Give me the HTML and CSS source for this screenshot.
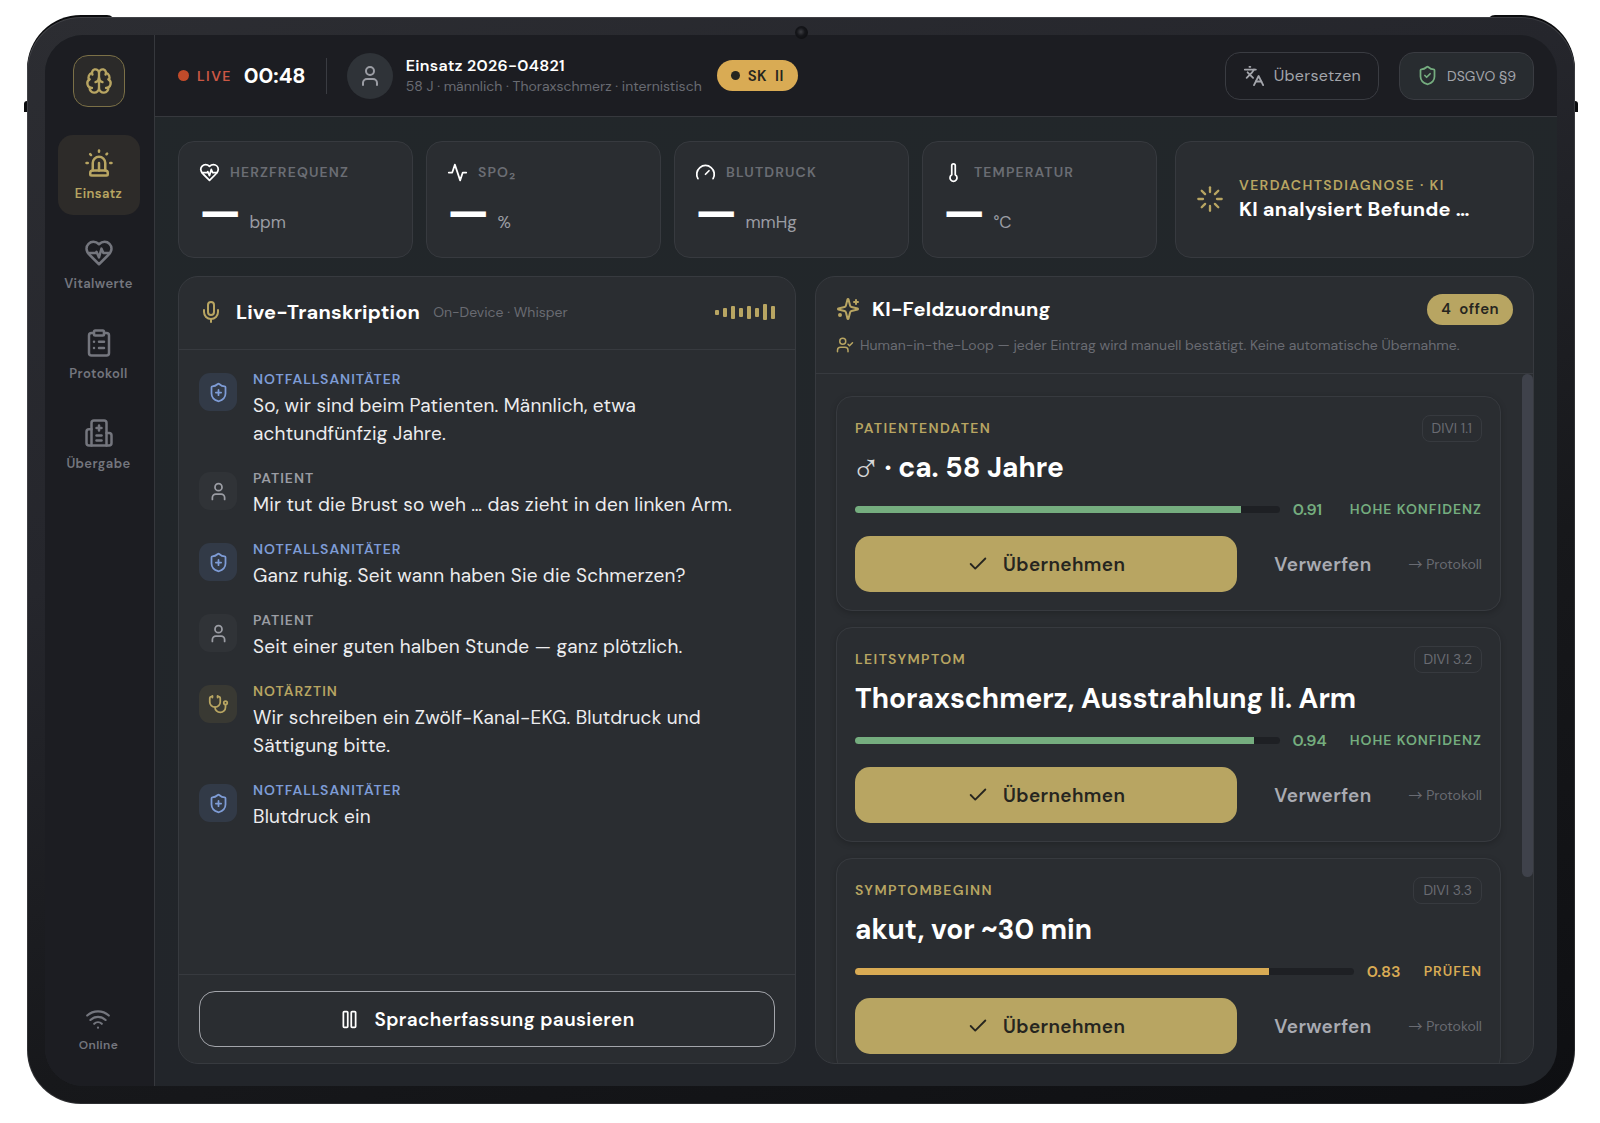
FILE: index.html
```html
<!DOCTYPE html>
<html lang="de">
<head>
    <meta charset="UTF-8">
    <meta name="viewport" content="width=device-width, initial-scale=1.0">
    <title>Einsatz 2026-04821</title>
    <link rel="stylesheet" href="styles.css">
</head>
<body>

<!-- Icon sprite -->
<svg class="sprite" aria-hidden="true">
    <symbol id="i-brain" viewBox="0 0 24 24"><path d="M12 18V5"/><path d="M15 13a4.17 4.17 0 0 1-3-4 4.17 4.17 0 0 1-3 4"/><path d="M17.598 6.5A3 3 0 1 0 12 5a3 3 0 1 0-5.598 1.5"/><path d="M17.997 5.125a4 4 0 0 1 2.526 5.77"/><path d="M18 18a4 4 0 0 0 2-7.464"/><path d="M19.967 17.483A4 4 0 1 1 12 18a4 4 0 1 1-7.967-.517"/><path d="M6 18a4 4 0 0 1-2-7.464"/><path d="M6.003 5.125a4 4 0 0 0-2.526 5.77"/></symbol>
    <symbol id="i-siren" viewBox="0 0 24 24"><path d="M7 18v-6a5 5 0 1 1 10 0v6"/><path d="M5 21a1 1 0 0 0 1 1h12a1 1 0 0 0 1-1v-1a2 2 0 0 0-2-2H7a2 2 0 0 0-2 2z"/><path d="M21 12h1"/><path d="M18.5 4.5 18 5"/><path d="M2 12h1"/><path d="M12 2v1"/><path d="m4.929 4.929.707.707"/><path d="M12 12v6"/></symbol>
    <symbol id="i-heart" viewBox="0 0 24 24"><path d="M19 14c1.49-1.46 3-3.21 3-5.5A5.5 5.5 0 0 0 16.5 3c-1.76 0-3 .5-4.5 2-1.5-1.5-2.74-2-4.5-2A5.5 5.5 0 0 0 2 8.5c0 2.3 1.5 4.05 3 5.5l7 7Z"/><path d="M3.22 12H9.5l.5-1 2 4.5 2-7 1.5 3.5h5.27"/></symbol>
    <symbol id="i-clipboard" viewBox="0 0 24 24"><rect x="8" y="2" width="8" height="4" rx="1"/><path d="M16 4h2a2 2 0 0 1 2 2v14a2 2 0 0 1-2 2H6a2 2 0 0 1-2-2V6a2 2 0 0 1 2-2h2"/><path d="M12 11h4"/><path d="M12 16h4"/><path d="M8 11h.01"/><path d="M8 16h.01"/></symbol>
    <symbol id="i-hospital" viewBox="0 0 24 24"><path d="M12 6v4"/><path d="M14 14h-4"/><path d="M14 18h-4"/><path d="M14 8h-4"/><path d="M18 12h2a2 2 0 0 1 2 2v6a2 2 0 0 1-2 2H4a2 2 0 0 1-2-2v-9a2 2 0 0 1 2-2h2"/><path d="M18 22V4a2 2 0 0 0-2-2H8a2 2 0 0 0-2 2v18"/></symbol>
    <symbol id="i-wifi" viewBox="0 0 24 24"><path d="M12 20h.01"/><path d="M2 8.82a15 15 0 0 1 20 0"/><path d="M5 12.859a10 10 0 0 1 14 0"/><path d="M8.5 16.429a5 5 0 0 1 7 0"/></symbol>
    <symbol id="i-user" viewBox="0 0 24 24"><path d="M19 21v-2a4 4 0 0 0-4-4H9a4 4 0 0 0-4 4v2"/><circle cx="12" cy="7" r="4"/></symbol>
    <symbol id="i-languages" viewBox="0 0 24 24"><path d="m5 8 6 6"/><path d="m4 14 6-6 2-3"/><path d="M2 5h12"/><path d="M7 2h1"/><path d="m22 22-5-10-5 10"/><path d="M14 18h6"/></symbol>
    <symbol id="i-shield-check" viewBox="0 0 24 24"><path d="M20 13c0 5-3.5 7.5-7.66 8.95a1 1 0 0 1-.67-.01C7.5 20.5 4 18 4 13V6a1 1 0 0 1 1-1c2 0 4.5-1.2 6.24-2.72a1.17 1.17 0 0 1 1.52 0C14.51 3.81 17 5 19 5a1 1 0 0 1 1 1z"/><path d="m9 12 2 2 4-4"/></symbol>
    <symbol id="i-shield-plus" viewBox="0 0 24 24"><path d="M20 13c0 5-3.5 7.5-7.66 8.95a1 1 0 0 1-.67-.01C7.5 20.5 4 18 4 13V6a1 1 0 0 1 1-1c2 0 4.5-1.2 6.24-2.72a1.17 1.17 0 0 1 1.52 0C14.51 3.81 17 5 19 5a1 1 0 0 1 1 1z"/><path d="M9 12h6"/><path d="M12 9v6"/></symbol>
    <symbol id="i-activity" viewBox="0 0 24 24"><path d="M22 12h-4l-3 9L9 3l-3 9H2"/></symbol>
    <symbol id="i-gauge" viewBox="0 0 24 24"><path d="m12 14 4-4"/><path d="M3.34 19a10 10 0 1 1 17.32 0"/></symbol>
    <symbol id="i-thermo" viewBox="0 0 24 24"><path d="M14 4v10.54a4 4 0 1 1-4 0V4a2 2 0 0 1 4 0Z"/></symbol>
    <symbol id="i-loader" viewBox="0 0 24 24"><path d="M12 2v4"/><path d="m16.2 7.8 2.9-2.9"/><path d="M18 12h4"/><path d="m16.2 16.2 2.9 2.9"/><path d="M12 18v4"/><path d="m4.9 19.1 2.9-2.9"/><path d="M2 12h4"/><path d="m4.9 4.9 2.9 2.9"/></symbol>
    <symbol id="i-mic" viewBox="0 0 24 24"><path d="M12 2a3 3 0 0 0-3 3v7a3 3 0 0 0 6 0V5a3 3 0 0 0-3-3Z"/><path d="M19 10v2a7 7 0 0 1-14 0v-2"/><path d="M12 19v3"/></symbol>
    <symbol id="i-sparkles" viewBox="0 0 24 24"><path d="M9.937 15.5A2 2 0 0 0 8.5 14.063l-6.135-1.582a.5.5 0 0 1 0-.962L8.5 9.936A2 2 0 0 0 9.937 8.5l1.582-6.135a.5.5 0 0 1 .963 0L14.063 8.5A2 2 0 0 0 15.5 9.937l6.135 1.581a.5.5 0 0 1 0 .964L15.5 14.063a2 2 0 0 0-1.437 1.437l-1.582 6.135a.5.5 0 0 1-.963 0z"/><path d="M20 3v4"/><path d="M22 5h-4"/><circle cx="4" cy="18" r="1"/></symbol>
    <symbol id="i-user-check" viewBox="0 0 24 24"><path d="m16 11 2 2 4-4"/><path d="M16 21v-2a4 4 0 0 0-4-4H6a4 4 0 0 0-4 4v2"/><circle cx="9" cy="7" r="4"/></symbol>
    <symbol id="i-stethoscope" viewBox="0 0 24 24"><path d="M11 2v2"/><path d="M5 2v2"/><path d="M5 3H4a2 2 0 0 0-2 2v4a6 6 0 0 0 12 0V5a2 2 0 0 0-2-2h-1"/><path d="M8 15a6 6 0 0 0 12 0v-3"/><circle cx="20" cy="10" r="2"/></symbol>
    <symbol id="i-check" viewBox="0 0 24 24"><path d="M20 6 9 17l-5-5"/></symbol>
    <symbol id="i-pause" viewBox="0 0 24 24"><rect x="14" y="3" width="5" height="18" rx="1"/><rect x="5" y="3" width="5" height="18" rx="1"/></symbol>
</svg>

<div class="device">
    <span class="corner corner-left"></span>
    <span class="corner corner-right"></span>
    <span class="side-key side-key-left"></span>
    <span class="side-key side-key-right"></span>
    <span class="camera"></span>

    <div class="screen">
        <nav class="sidebar">
            <div class="logo"><svg class="icon icon-28"><use href="#i-brain"/></svg></div>
            <a href="#" class="nav-item active"><svg class="icon icon-30"><use href="#i-siren"/></svg>Einsatz</a>
            <a href="#" class="nav-item"><svg class="icon icon-30"><use href="#i-heart"/></svg>Vitalwerte</a>
            <a href="#" class="nav-item"><svg class="icon icon-30"><use href="#i-clipboard"/></svg>Protokoll</a>
            <a href="#" class="nav-item"><svg class="icon icon-30"><use href="#i-hospital"/></svg>Übergabe</a>
            <div class="online"><svg class="icon icon-26"><use href="#i-wifi"/></svg>Online</div>
        </nav>

        <div class="main">
            <header class="topbar">
                <span class="live"><span class="live-dot"></span>LIVE</span>
                <span class="timer">00:48</span>
                <span class="divider"></span>
                <span class="avatar"><svg class="icon icon-24"><use href="#i-user"/></svg></span>
                <div class="mission">
                    <h1>Einsatz 2026-04821</h1>
                    <p>58 J · männlich · Thoraxschmerz · internistisch</p>
                </div>
                <span class="pill pill-amber"><span class="pill-dot"></span><span>SK</span> <span>II</span></span>
                <div class="top-actions">
                    <button class="btn-top"><svg class="icon icon-22"><use href="#i-languages"/></svg>Übersetzen</button>
                    <span class="privacy"><svg class="icon icon-21"><use href="#i-shield-check"/></svg>DSGVO §9</span>
                </div>
            </header>

            <main class="content">
                <section class="overview">
                    <div class="vitals">
                        <div class="vital">
                            <div class="vital-label"><svg class="icon icon-21"><use href="#i-heart"/></svg>HERZFREQUENZ</div>
                            <div class="vital-value"><b>—</b>bpm</div>
                        </div>
                        <div class="vital">
                            <div class="vital-label"><svg class="icon icon-21"><use href="#i-activity"/></svg>SPO₂</div>
                            <div class="vital-value"><b>—</b>%</div>
                        </div>
                        <div class="vital">
                            <div class="vital-label"><svg class="icon icon-21"><use href="#i-gauge"/></svg>BLUTDRUCK</div>
                            <div class="vital-value"><b>—</b>mmHg</div>
                        </div>
                        <div class="vital">
                            <div class="vital-label"><svg class="icon icon-21"><use href="#i-thermo"/></svg>TEMPERATUR</div>
                            <div class="vital-value"><b>—</b>°C</div>
                        </div>
                    </div>
                    <div class="diagnosis">
                        <svg class="icon icon-28 gold"><use href="#i-loader"/></svg>
                        <div>
                            <div class="caption gold">VERDACHTSDIAGNOSE · KI</div>
                            <div class="diagnosis-text">KI analysiert Befunde …</div>
                        </div>
                    </div>
                </section>

                <div class="panels">
                    <section class="panel">
                        <div class="transcript-head">
                            <svg class="icon icon-24 gold"><use href="#i-mic"/></svg>
                            <h2>Live-Transkription</h2>
                            <span class="hint">On-Device · Whisper</span>
                            <div class="wave">
                                <i class="h5"></i><i class="h9"></i><i class="h13"></i><i class="h9"></i><i class="h13"></i><i class="h9"></i><i class="h16"></i><i class="h13"></i>
                            </div>
                        </div>
                        <div class="messages">
                            <div class="message medic">
                                <span class="role-icon"><svg class="icon icon-21"><use href="#i-shield-plus"/></svg></span>
                                <div><div class="caption">NOTFALLSANITÄTER</div><p>So, wir sind beim Patienten. Männlich, etwa achtundfünfzig Jahre.</p></div>
                            </div>
                            <div class="message patient">
                                <span class="role-icon"><svg class="icon icon-21"><use href="#i-user"/></svg></span>
                                <div><div class="caption">PATIENT</div><p>Mir tut die Brust so weh … das zieht in den linken Arm.</p></div>
                            </div>
                            <div class="message medic">
                                <span class="role-icon"><svg class="icon icon-21"><use href="#i-shield-plus"/></svg></span>
                                <div><div class="caption">NOTFALLSANITÄTER</div><p>Ganz ruhig. Seit wann haben Sie die Schmerzen?</p></div>
                            </div>
                            <div class="message patient">
                                <span class="role-icon"><svg class="icon icon-21"><use href="#i-user"/></svg></span>
                                <div><div class="caption">PATIENT</div><p>Seit einer guten halben Stunde — ganz plötzlich.</p></div>
                            </div>
                            <div class="message doctor">
                                <span class="role-icon"><svg class="icon icon-21"><use href="#i-stethoscope"/></svg></span>
                                <div><div class="caption">NOTÄRZTIN</div><p>Wir schreiben ein Zwölf-Kanal-EKG. Blutdruck und Sättigung bitte.</p></div>
                            </div>
                            <div class="message medic">
                                <span class="role-icon"><svg class="icon icon-21"><use href="#i-shield-plus"/></svg></span>
                                <div><div class="caption">NOTFALLSANITÄTER</div><p>Blutdruck ein</p></div>
                            </div>
                        </div>
                        <div class="transcript-foot">
                            <button class="btn-pause"><svg class="icon icon-21"><use href="#i-pause"/></svg>Spracherfassung pausieren</button>
                        </div>
                    </section>

                    <section class="panel">
                        <div class="fields-head">
                            <div class="fields-title">
                                <svg class="icon icon-24 gold"><use href="#i-sparkles"/></svg>
                                <h2>KI-Feldzuordnung</h2>
                                <span class="pill pill-gold"><span>4</span> <span>offen</span></span>
                            </div>
                            <div class="hint fields-hint"><svg class="icon icon-18 gold"><use href="#i-user-check"/></svg>Human-in-the-Loop — jeder Eintrag wird manuell bestätigt. Keine automatische Übernahme.</div>
                        </div>
                        <div class="fields-body">
                            <div class="fields-list">
                                <article class="field">
                                    <div class="field-top"><span class="caption gold">PATIENTENDATEN</span><span class="tag">DIVI 1.1</span></div>
                                    <h3><span class="sex">♂</span> · ca. 58 Jahre</h3>
                                    <div class="confidence high">
                                        <div class="track"><div class="fill" style="width: 91%"></div></div>
                                        <span class="score">0.91</span><span class="caption">HOHE KONFIDENZ</span>
                                    </div>
                                    <div class="field-actions">
                                        <button class="btn-accept"><svg class="icon icon-22"><use href="#i-check"/></svg>Übernehmen</button>
                                        <button class="btn-reject">Verwerfen</button>
                                        <span class="hint"><span class="arrow">→</span> Protokoll</span>
                                    </div>
                                </article>
                                <article class="field">
                                    <div class="field-top"><span class="caption gold">LEITSYMPTOM</span><span class="tag">DIVI 3.2</span></div>
                                    <h3>Thoraxschmerz, Ausstrahlung li. Arm</h3>
                                    <div class="confidence high">
                                        <div class="track"><div class="fill" style="width: 94%"></div></div>
                                        <span class="score">0.94</span><span class="caption">HOHE KONFIDENZ</span>
                                    </div>
                                    <div class="field-actions">
                                        <button class="btn-accept"><svg class="icon icon-22"><use href="#i-check"/></svg>Übernehmen</button>
                                        <button class="btn-reject">Verwerfen</button>
                                        <span class="hint"><span class="arrow">→</span> Protokoll</span>
                                    </div>
                                </article>
                                <article class="field">
                                    <div class="field-top"><span class="caption gold">SYMPTOMBEGINN</span><span class="tag">DIVI 3.3</span></div>
                                    <h3>akut, vor ~30 min</h3>
                                    <div class="confidence check">
                                        <div class="track"><div class="fill" style="width: 83%"></div></div>
                                        <span class="score">0.83</span><span class="caption">PRÜFEN</span>
                                    </div>
                                    <div class="field-actions">
                                        <button class="btn-accept"><svg class="icon icon-22"><use href="#i-check"/></svg>Übernehmen</button>
                                        <button class="btn-reject">Verwerfen</button>
                                        <span class="hint"><span class="arrow">→</span> Protokoll</span>
                                    </div>
                                </article>
                            </div>
                            <div class="scrollbar"><div class="thumb"></div></div>
                        </div>
                    </section>
                </div>
            </main>
        </div>
    </div>
</div>

</body>
</html>
```

FILE: styles.css
```css
* {
    box-sizing: border-box;
}
body {
    margin: 0;
    background-color: #fff;
    color: #fff;
    font-family: "DM Sans", Inter, "Liberation Sans", sans-serif;
    font-size: 14px;
}
h1, h2, h3, p {
    margin: 0;
}
button {
    font-family: inherit;
    letter-spacing: 0.02em;
    cursor: pointer;
}
.sprite {
    display: none;
}
.icon {
    flex: none;
    fill: none;
    stroke: currentColor;
    stroke-width: 2;
    stroke-linecap: round;
    stroke-linejoin: round;
}
.icon-18 { width: 18px; height: 18px; }
.icon-21 { width: 21px; height: 21px; }
.icon-22 { width: 22px; height: 22px; }
.icon-24 { width: 24px; height: 24px; }
.icon-26 { width: 26px; height: 26px; }
.icon-28 { width: 28px; height: 28px; }
.icon-30 { width: 30px; height: 30px; }
.gold {
    color: #b8a562;
}

/* Tablet frame */
.device {
    position: relative;
    height: calc(100vh - 36px);
    margin: 17px 25px 18px 27px;
    padding: 18px;
    border-radius: 54px;
    background: linear-gradient(160deg, #2c2d32 0%, #25262c 35%, #17181b 65%, #0e0f12 100%);
    box-shadow: inset 0 0 0 1px rgba(255, 255, 255, 0.1);
}
.corner {
    position: absolute;
    z-index: -1;
    top: -2px;
    width: 88px;
    height: 60px;
    background-color: #0b0c0e;
}
.corner-left {
    left: 0;
    border-radius: 54px 8px 0 0;
}
.corner-right {
    right: 0;
    border-radius: 8px 54px 0 0;
}
.side-key {
    position: absolute;
    top: 84px;
    width: 3px;
    height: 11px;
    background-color: #0b0c0e;
}
.side-key-left {
    left: -3px;
    border-radius: 3px 0 0 0;
}
.side-key-right {
    right: -3px;
    border-radius: 0 3px 0 0;
}
.camera {
    position: absolute;
    top: 9px;
    left: calc(50% - 6px);
    width: 13px;
    height: 13px;
    border-radius: 50%;
    background: radial-gradient(circle at 45% 45%, #3c3d42 0, #15161a 40%, #0a0b0d 100%);
}
.screen {
    display: flex;
    height: 100%;
    border-radius: 38px;
    overflow: hidden;
    background: linear-gradient(#22272a, #22252a);
}

/* Sidebar */
.sidebar {
    display: flex;
    flex-direction: column;
    align-items: center;
    gap: 10px;
    width: 110px;
    flex: none;
    padding: 20px 2px 32px 0;
    border-right: 1px solid #36383d;
    background-color: #1c1d22;
}
.logo {
    display: flex;
    align-items: center;
    justify-content: center;
    width: 52px;
    height: 52px;
    margin-bottom: 18px;
    border: 1px solid #7b7047;
    border-radius: 15px;
    background-color: #2b2a29;
    color: #b8a562;
}
.nav-item, .online {
    display: flex;
    flex-direction: column;
    align-items: center;
    color: #74767e;
    font-size: 13px;
    font-weight: 600;
    letter-spacing: 0.03em;
    line-height: 18px;
}
.nav-item {
    justify-content: center;
    gap: 7px;
    width: 82px;
    height: 80px;
    border-radius: 15px;
    text-decoration: none;
}
.nav-item.active {
    background-color: #2d2b29;
    color: #b8a562;
}
.online {
    gap: 4px;
    margin-top: auto;
    font-size: 12px;
}

/* Top bar */
.main {
    display: flex;
    flex-direction: column;
    flex: 1;
    min-width: 0;
}
.topbar {
    display: flex;
    align-items: center;
    height: 82px;
    flex: none;
    padding: 0 23px;
    border-bottom: 1px solid #36383d;
    background-color: #1c1d22;
}
.live {
    display: flex;
    align-items: center;
    gap: 8px;
    color: #cb5744;
    font-size: 14px;
    font-weight: 600;
    letter-spacing: 0.1em;
}
.live-dot {
    width: 11px;
    height: 11px;
    border-radius: 50%;
    background-color: #c14b2a;
}
.timer {
    margin-left: 12px;
    font-size: 21px;
    font-weight: 700;
}
.divider {
    width: 1px;
    height: 36px;
    margin: 0 20px;
    background-color: #3a3c42;
}
.avatar {
    display: flex;
    align-items: center;
    justify-content: center;
    width: 46px;
    height: 46px;
    margin-right: 13px;
    border-radius: 50%;
    background-color: #2f3338;
    color: #9b9da4;
}
.mission h1 {
    font-size: 16px;
    font-weight: 600;
    letter-spacing: 0.02em;
    line-height: 20px;
}
.mission p {
    color: #696b72;
    font-size: 14px;
    line-height: 20px;
}
.pill {
    display: flex;
    align-items: center;
    gap: 8px;
    height: 31px;
    padding: 0 14px;
    border-radius: 16px;
    color: #26251f;
    font-size: 15px;
    font-weight: 600;
    letter-spacing: 0.03em;
}
.pill-amber {
    margin-left: 15px;
    background-color: #d9ab54;
}
.pill-gold {
    margin-left: auto;
    background-color: #b8a562;
}
.pill-dot {
    width: 9px;
    height: 9px;
    border-radius: 50%;
    background-color: #26251f;
}
.top-actions {
    display: flex;
    gap: 20px;
    margin-left: auto;
}
.btn-top, .privacy {
    display: flex;
    align-items: center;
    gap: 9px;
    height: 48px;
    padding: 0 17px;
    border: 1px solid #3a3c42;
    border-radius: 15px;
    background-color: transparent;
    color: #a3a5ab;
    font-size: 16px;
}
.privacy {
    background-color: #282c30;
    font-size: 14px;
}
.privacy .icon {
    color: #75ad7f;
}

/* Vitals */
.content {
    display: flex;
    flex-direction: column;
    flex: 1;
    gap: 18px;
    min-height: 0;
    padding: 24px 23px 22px;
}
.overview {
    display: grid;
    grid-template-columns: 979fr 359fr;
    gap: 18px;
}
.vitals {
    display: grid;
    grid-template-columns: repeat(4, 1fr);
    gap: 13px;
}
.vital, .diagnosis {
    border: 1px solid #373a3f;
    border-radius: 16px;
    background-color: #2a2d31;
}
.vital {
    padding: 19px 20px 27px;
}
.vital-label {
    display: flex;
    align-items: center;
    gap: 10px;
    height: 22px;
    color: #6b6d74;
    font-size: 14px;
    font-weight: 600;
    letter-spacing: 0.08em;
}
.vital-label .icon {
    color: #fff;
}
.vital-value {
    display: flex;
    align-items: baseline;
    gap: 8px;
    height: 36px;
    margin-top: 11px;
    color: #9b9da4;
    font-size: 17px;
    line-height: 36px;
}
.vital-value b {
    color: #fff;
    font-size: 46px;
    font-weight: 800;
}
.diagnosis {
    display: flex;
    align-items: center;
    gap: 15px;
    padding: 0 20px 2px;
}
.caption {
    font-size: 14px;
    font-weight: 600;
    letter-spacing: 0.07em;
    line-height: 20px;
}
.diagnosis .caption, .field-top .caption {
    letter-spacing: 0.1em;
}
.diagnosis-text {
    font-size: 20px;
    font-weight: 700;
    letter-spacing: 0.01em;
    line-height: 28px;
}

/* Panels */
.panels {
    display: grid;
    grid-template-columns: 618fr 719fr;
    grid-template-rows: 100%;
    gap: 19px;
    flex: 1;
    min-height: 0;
}
.panel {
    display: flex;
    flex-direction: column;
    min-width: 0;
    overflow: hidden;
    border: 1px solid #373a3f;
    border-radius: 20px;
    background-color: #2a2d31;
}
.panel h2 {
    font-size: 20px;
    font-weight: 700;
    letter-spacing: 0.01em;
    line-height: 28px;
}
.hint {
    color: #696b72;
    font-size: 14px;
}
.transcript-head {
    display: flex;
    align-items: center;
    gap: 13px;
    height: 73px;
    flex: none;
    padding: 0 20px 2px;
    border-bottom: 1px solid #373a3f;
}
.wave {
    display: flex;
    align-items: center;
    gap: 4px;
    margin-left: auto;
}
.wave i {
    width: 4px;
    border-radius: 1px;
    background-color: #b8a562;
}
.wave .h5 { height: 5px; }
.wave .h9 { height: 9px; }
.wave .h13 { height: 13px; }
.wave .h16 { height: 16px; }
.messages {
    display: flex;
    flex-direction: column;
    flex: 1;
    gap: 20px;
    min-height: 0;
    padding: 19px 60px 0 20px;
}
.message {
    display: flex;
    gap: 16px;
}
.message .caption {
    line-height: 21px;
}
.message p {
    margin-top: 2px;
    color: #ececee;
    font-size: 19px;
    letter-spacing: 0.01em;
    line-height: 28px;
}
.role-icon {
    display: flex;
    align-items: center;
    justify-content: center;
    width: 38px;
    height: 38px;
    margin-top: 4px;
    flex: none;
    border-radius: 11px;
}
.medic .role-icon {
    background-color: #323a47;
}
.medic .role-icon, .medic .caption {
    color: #7e9cd6;
}
.patient .role-icon {
    background-color: #303337;
}
.patient .role-icon, .patient .caption {
    color: #9b9da4;
}
.doctor .role-icon {
    background-color: #393933;
}
.doctor .role-icon, .doctor .caption {
    color: #b8a562;
}
.transcript-foot {
    padding: 16px 20px;
    border-top: 1px solid #373a3f;
}
.btn-pause {
    display: flex;
    align-items: center;
    justify-content: center;
    gap: 14px;
    width: 100%;
    height: 56px;
    border: 1px solid #a3a5ab;
    border-radius: 16px;
    background-color: transparent;
    color: #fff;
    font-size: 19px;
    font-weight: 600;
}

/* Field mapping */
.fields-head {
    padding: 16px 20px;
    border-bottom: 1px solid #373a3f;
}
.fields-title {
    display: flex;
    align-items: center;
    gap: 12px;
    height: 32px;
}
.fields-hint {
    display: flex;
    align-items: center;
    gap: 6px;
    margin-top: 8px;
    line-height: 24px;
    white-space: nowrap;
}
.fields-body {
    display: flex;
    flex: 1;
    min-height: 0;
    overflow: hidden;
}
.fields-list {
    flex: 1;
    min-width: 0;
    padding: 22px 21px 0 20px;
}
.scrollbar {
    width: 11px;
    flex: none;
}
.thumb {
    height: 73%;
    border-radius: 6px;
    background-color: #3f424b;
}
.field {
    margin-bottom: 16px;
    padding: 17px 18px 18px;
    border: 1px solid #373a3f;
    border-radius: 16px;
    box-shadow: 0 2px 6px rgba(0, 0, 0, 0.2);
}
.field-top {
    display: flex;
    align-items: center;
    justify-content: space-between;
    height: 28px;
}
.tag {
    padding: 0 9px;
    border: 1px solid #373a3f;
    border-radius: 8px;
    color: #696b72;
    font-size: 14px;
    line-height: 25px;
}
.field h3 {
    height: 36px;
    margin-top: 8px;
    font-size: 28px;
    font-weight: 700;
    line-height: 36px;
}
.sex {
    display: inline-block;
    height: 36px;
    margin: 0 -3px 0 -4px;
    color: #d5d6d8;
    font-family: "DejaVu Sans", sans-serif;
    font-size: 40px;
    font-weight: 200;
    line-height: 36px;
    vertical-align: top;
}
.confidence {
    display: flex;
    align-items: center;
    height: 20px;
    margin-top: 13px;
}
.track {
    flex: 1;
    height: 7px;
    border-radius: 4px;
    overflow: hidden;
    background-color: #1e2024;
}
.fill {
    height: 100%;
    background-color: currentColor;
}
.score {
    min-width: 34px;
    margin: 0 23px 0 13px;
    font-size: 16px;
    font-weight: 600;
}
.high {
    color: #75ad7f;
}
.check {
    color: #d9ab54;
}
.field-actions {
    display: flex;
    align-items: center;
    margin-top: 17px;
}
.btn-accept, .btn-reject {
    height: 56px;
    border: 0;
    border-radius: 15px;
    font-size: 19px;
    font-weight: 600;
}
.btn-accept {
    display: flex;
    align-items: center;
    justify-content: center;
    gap: 14px;
    flex: 1;
    background-color: #b8a562;
    color: #26251f;
}
.btn-reject {
    padding: 0 37px;
    background-color: transparent;
    color: #a9abb2;
}
.arrow {
    font-family: "Noto Sans CJK JP", "DejaVu Sans", sans-serif;
    line-height: 1;
}
```
